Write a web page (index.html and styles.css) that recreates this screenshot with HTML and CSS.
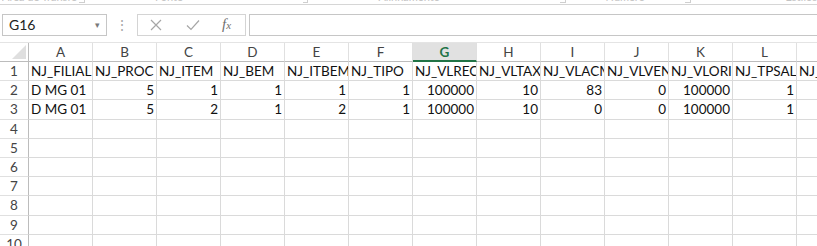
FILE: index.html
```html
<!DOCTYPE html>
<html lang="pt">
<head>
  <meta charset="UTF-8">
  <title>Planilha</title>
  <link rel="stylesheet" href="styles.css">
</head>
<body>
  <div class="ribbon-tail">
    <span class="group-label lbl-clip">Área de Transferência</span>
    <span class="launcher l1"></span>
    <span class="group-label lbl-font">Fonte</span>
    <span class="launcher l2"></span>
    <span class="group-label lbl-align">Alinhamento</span>
    <span class="launcher l3"></span>
    <span class="group-label lbl-num">Número</span>
    <span class="launcher l4"></span>
    <span class="group-label lbl-style">Estilos</span>
  </div>

  <div class="formula-bar">
    <div class="name-box">
      <span>G16</span>
      <span class="drop">&#9662;</span>
    </div>
    <div class="grip">&#8942;</div>
    <div class="fx-box">
      <svg class="icon" width="12" height="12" viewBox="0 0 12 12"><path d="M1 1 L11 11 M11 1 L1 11" stroke="#a6a6a6" stroke-width="1.2" fill="none"/></svg>
      <svg class="icon" width="14" height="12" viewBox="0 0 14 12"><path d="M1 6.5 L5 10.5 L13 1.5" stroke="#a6a6a6" stroke-width="1.2" fill="none"/></svg>
      <span class="fx">f<i>x</i></span>
    </div>
    <div class="formula-input"></div>
  </div>

  <div class="sheet">
    <!-- column headers -->
    <div class="corner"><svg width="14" height="14" viewBox="0 0 14 14"><polygon points="14,0 14,14 0,14" fill="#dfdfdf"/></svg></div>
    <div class="ch">A</div>
    <div class="ch">B</div>
    <div class="ch">C</div>
    <div class="ch">D</div>
    <div class="ch">E</div>
    <div class="ch">F</div>
    <div class="ch active">G</div>
    <div class="ch">H</div>
    <div class="ch">I</div>
    <div class="ch">J</div>
    <div class="ch">K</div>
    <div class="ch">L</div>
    <div class="ch">M</div>

    <!-- row 1 -->
    <div class="rh">1</div>
    <div class="c">NJ_FILIAL</div>
    <div class="c">NJ_PROC</div>
    <div class="c">NJ_ITEM</div>
    <div class="c">NJ_BEM</div>
    <div class="c">NJ_ITBEM</div>
    <div class="c">NJ_TIPO</div>
    <div class="c">NJ_VLRECOM</div>
    <div class="c">NJ_VLTAXCO</div>
    <div class="c">NJ_VLACMUL</div>
    <div class="c">NJ_VLVENDA</div>
    <div class="c">NJ_VLORIG</div>
    <div class="c">NJ_TPSALDO</div>
    <div class="c">NJ_DTAQUIS</div>

    <!-- row 2 -->
    <div class="rh">2</div>
    <div class="c">D MG 01</div>
    <div class="c n">5</div>
    <div class="c n">1</div>
    <div class="c n">1</div>
    <div class="c n">1</div>
    <div class="c n">1</div>
    <div class="c n">100000</div>
    <div class="c n">10</div>
    <div class="c n">83</div>
    <div class="c n">0</div>
    <div class="c n">100000</div>
    <div class="c n">1</div>
    <div class="c"></div>

    <!-- row 3 -->
    <div class="rh">3</div>
    <div class="c">D MG 01</div>
    <div class="c n">5</div>
    <div class="c n">2</div>
    <div class="c n">1</div>
    <div class="c n">2</div>
    <div class="c n">1</div>
    <div class="c n">100000</div>
    <div class="c n">10</div>
    <div class="c n">0</div>
    <div class="c n">0</div>
    <div class="c n">100000</div>
    <div class="c n">1</div>
    <div class="c"></div>

    <div class="rh">4</div>
    <div class="c"></div><div class="c"></div><div class="c"></div><div class="c"></div><div class="c"></div><div class="c"></div><div class="c"></div><div class="c"></div><div class="c"></div><div class="c"></div><div class="c"></div><div class="c"></div><div class="c"></div>
    <div class="rh">5</div>
    <div class="c"></div><div class="c"></div><div class="c"></div><div class="c"></div><div class="c"></div><div class="c"></div><div class="c"></div><div class="c"></div><div class="c"></div><div class="c"></div><div class="c"></div><div class="c"></div><div class="c"></div>
    <div class="rh">6</div>
    <div class="c"></div><div class="c"></div><div class="c"></div><div class="c"></div><div class="c"></div><div class="c"></div><div class="c"></div><div class="c"></div><div class="c"></div><div class="c"></div><div class="c"></div><div class="c"></div><div class="c"></div>
    <div class="rh">7</div>
    <div class="c"></div><div class="c"></div><div class="c"></div><div class="c"></div><div class="c"></div><div class="c"></div><div class="c"></div><div class="c"></div><div class="c"></div><div class="c"></div><div class="c"></div><div class="c"></div><div class="c"></div>
    <div class="rh">8</div>
    <div class="c"></div><div class="c"></div><div class="c"></div><div class="c"></div><div class="c"></div><div class="c"></div><div class="c"></div><div class="c"></div><div class="c"></div><div class="c"></div><div class="c"></div><div class="c"></div><div class="c"></div>
    <div class="rh">9</div>
    <div class="c"></div><div class="c"></div><div class="c"></div><div class="c"></div><div class="c"></div><div class="c"></div><div class="c"></div><div class="c"></div><div class="c"></div><div class="c"></div><div class="c"></div><div class="c"></div><div class="c"></div>
    <div class="rh">10</div>
    <div class="c"></div><div class="c"></div><div class="c"></div><div class="c"></div><div class="c"></div><div class="c"></div><div class="c"></div><div class="c"></div><div class="c"></div><div class="c"></div><div class="c"></div><div class="c"></div><div class="c"></div>
  </div>
</body>
</html>
```

FILE: styles.css
```css
* {
  margin: 0;
  padding: 0;
  box-sizing: border-box;
}

body {
  width: 817px;
  height: 246px;
  overflow: hidden;
  background: #fff;
  font-family: Lato, 'Open Sans', sans-serif;
  color: #222;
}

/* Ribbon bottom edge, group labels mostly cut off */
.ribbon-tail {
  display: flex;
  height: 5px;
  overflow: hidden;
  border-bottom: 1px solid #d6d6d6;
  background: #fff;
  font-size: 11px;
  color: #c4c4c4;
}

.group-label {
  line-height: 11px;
  margin-top: -9px;
  white-space: nowrap;
}

.launcher {
  width: 6px;
  height: 6px;
  margin-top: -3px;
  border-right: 1px solid #cfcfcf;
  border-bottom: 1px solid #cfcfcf;
}

.lbl-clip { margin-left: 2px; width: 80px; overflow: hidden; }
.l1 { margin-left: 2px; }
.lbl-font { margin-left: 70px; }
.l2 { margin-left: 120px; }
.lbl-align { margin-left: 70px; }
.l3 { margin-left: 120px; }
.lbl-num { margin-left: 40px; }
.l4 { margin-left: 40px; }
.lbl-style { margin-left: 95px; }

/* Formula bar */
.formula-bar {
  display: flex;
  align-items: center;
  height: 37px;
  padding-top: 2px;
}

.name-box {
  display: flex;
  align-items: center;
  justify-content: space-between;
  width: 105px;
  height: 22px;
  margin-left: 2px;
  padding: 0 6px 0 6px;
  border: 1px solid #c6c6c6;
  font-size: 14px;
  color: #222;
}

.drop {
  font-size: 9px;
  color: #7a7a7a;
}

.grip {
  width: 30px;
  text-align: center;
  font-size: 14px;
  color: #a8a8a8;
}

.fx-box {
  display: flex;
  align-items: center;
  width: 109px;
  height: 22px;
  border: 1px solid #d4d4d4;
  padding-left: 12px;
  gap: 24px;
}

.fx {
  font-family: 'Liberation Serif', serif;
  font-style: italic;
  font-size: 15px;
  color: #6f6f6f;
  margin-left: -2px;
}

.fx i {
  font-size: 11px;
}

.formula-input {
  flex: 1;
  height: 22px;
  margin-left: 3px;
  border: 1px solid #c6c6c6;
  border-right: none;
}

/* Sheet grid */
.sheet {
  display: grid;
  grid-template-columns: 29px repeat(13, 64px);
  grid-template-rows: 19px;
  grid-auto-rows: 19.2px;
  width: 861px;
  font-size: 13.5px;
  border-top: 1px solid #e4e4e4;
}

.corner {
  display: flex;
  align-items: flex-end;
  justify-content: flex-end;
  padding: 0 2px 2px 0;
  border-right: 1px solid #bcbcbc;
  border-bottom: 1px solid #bcbcbc;
}

.ch {
  text-align: center;
  line-height: 19px;
  color: #444;
  border-right: 1px solid #e0e0e0;
  border-bottom: 1px solid #bcbcbc;
}

.ch.active {
  background: #e1e1e1;
  color: #217346;
  font-weight: 700;
  border-bottom: 2px solid #217346;
}

.rh {
  text-align: center;
  line-height: 18px;
  color: #444;
  border-right: 1px solid #bcbcbc;
  border-bottom: 1px solid #e0e0e0;
}

.c {
  padding: 0 2px;
  line-height: 18px;
  white-space: nowrap;
  overflow: hidden;
  color: #111;
  border-right: 1px solid #dadada;
  border-bottom: 1px solid #dadada;
}

.c.n {
  text-align: right;
}
```
